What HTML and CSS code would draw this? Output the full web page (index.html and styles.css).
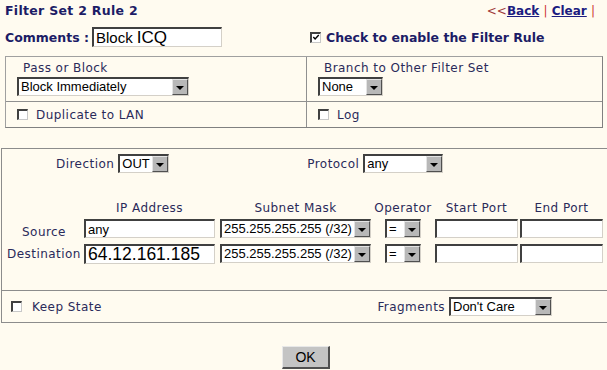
FILE: index.html
```html
<!DOCTYPE html>
<html>
<head>
<meta charset="utf-8">
<title>Filter Set 2 Rule 2</title>
<link rel="stylesheet" href="styles.css">
</head>
<body>
<div class="page">
  <div class="top">
    <div class="title">Filter Set 2 Rule 2</div>
    <div class="links"><span class="lt">&lt;&lt;</span><a href="#">Back</a> <span class="bar">|</span> <a href="#">Clear</a> <span class="bar">|</span></div>
  </div>

  <div class="comments-row">
    <div class="cm-left">
      <div class="comments">Comments :</div>
      <div class="field comment-field"><span class="s1">Block</span> <span class="s2">ICQ</span></div>
    </div>
    <div class="enable"><span class="cb"><svg viewBox="0 0 9 9" width="9" height="9"><path d="M1.5 4 L3.5 6.2 L7.6 1.8" fill="none" stroke="#000" stroke-width="1.6"/></svg></span><span>Check to enable the Filter Rule</span></div>
  </div>

  <div class="box1">
    <div class="cell c1">
      <div class="lbl">Pass or Block</div>
      <div class="sel w-pass"><span class="v">Block Immediately</span><span class="btn"><span class="arrow"></span></span></div>
    </div>
    <div class="cell c2">
      <div class="lbl">Branch to Other Filter Set</div>
      <div class="sel w-none"><span class="v">None</span><span class="btn"><span class="arrow"></span></span></div>
    </div>
    <div class="cell c3 chk"><span class="cb"></span><span>Duplicate to LAN</span></div>
    <div class="cell c4 chk"><span class="cb"></span><span>Log</span></div>
  </div>

  <div class="box2">
    <div class="dirrow">
      <div class="dir-group"><span class="dlabel">Direction</span><div class="sel w-out"><span class="v">OUT</span><span class="btn"><span class="arrow"></span></span></div></div>
      <div class="proto-group"><span class="dlabel">Protocol</span><div class="sel w-proto"><span class="v">any</span><span class="btn"><span class="arrow"></span></span></div></div>
    </div>
    <div class="grid">
      <div class="h"></div>
      <div class="h w-ip">IP Address</div>
      <div class="h w-mask">Subnet Mask</div>
      <div class="h w-op">Operator</div>
      <div class="h w-port">Start Port</div>
      <div class="h w-port">End Port</div>

      <div class="rl">Source</div>
      <div class="field w-ip"><span class="fv sm">any</span></div>
      <div class="sel w-mask"><span class="v">255.255.255.255 (/32)</span><span class="btn"><span class="arrow"></span></span></div>
      <div class="sel w-op"><span class="v">=</span><span class="btn"><span class="arrow"></span></span></div>
      <div class="field w-port"></div>
      <div class="field w-port"></div>

      <div class="rl">Destination</div>
      <div class="field w-ip tall"><span class="fv lg">64.12.161.185</span></div>
      <div class="sel w-mask"><span class="v">255.255.255.255 (/32)</span><span class="btn"><span class="arrow"></span></span></div>
      <div class="sel w-op"><span class="v">=</span><span class="btn"><span class="arrow"></span></span></div>
      <div class="field w-port"></div>
      <div class="field w-port"></div>
    </div>
  </div>

  <div class="box3">
    <div class="chk keep"><span class="cb"></span><span>Keep State</span></div>
    <div class="frag"><span class="dlabel">Fragments</span><div class="sel w-frag"><span class="v">Don't Care</span><span class="btn"><span class="arrow"></span></span></div></div>
  </div>

  <div class="actions"><button class="ok" type="button">OK</button></div>
</div>
</body>
</html>
```

FILE: styles.css
```css
html, body {
  margin: 0;
  padding: 0;
  background: #fffbf0;
}
.page {
  width: 607px;
  height: 370px;
  overflow: hidden;
  padding-top: 3px;
  box-sizing: border-box;
  font-family: "DejaVu Sans", Verdana, sans-serif;
  font-size: 12px;
  letter-spacing: 0.45px;
  color: #22225a;
}
.top {
  display: flex;
  justify-content: space-between;
  align-items: flex-start;
  height: 21px;
  padding: 0 12px 0 5px;
}
.title {
  font-weight: bold;
  font-size: 12.5px;
  letter-spacing: 0.3px;
  color: #1c1c66;
}
.links {
  padding-top: 1px;
  font-size: 12px;
  font-weight: bold;
  letter-spacing: 0;
  color: #1c1c80;
}
.links a { color: #1c1c80; }
.links .lt { color: #a03a3a; font-weight: normal; }
.links .bar { color: #cc3333; font-weight: normal; }

.comments-row {
  display: grid;
  grid-template-columns: 305px 1fr;
  align-items: center;
  height: 26px;
  padding-left: 5px;
}
.cm-left {
  display: flex;
  align-items: center;
}
.comments {
  font-weight: bold;
  font-size: 12.5px;
  letter-spacing: 0;
  color: #1c1c66;
  white-space: nowrap;
  flex: none;
  margin-right: 3px;
}
.field {
  box-sizing: border-box;
  height: 19px;
  background: #fff;
  border-top: 2px solid #404040;
  border-left: 2px solid #404040;
  border-right: 1px solid #d4d0c8;
  border-bottom: 1px solid #d4d0c8;
  font-family: "Liberation Sans", Arial, sans-serif;
  letter-spacing: 0;
  color: #000;
  display: flex;
  align-items: center;
  padding-left: 2px;
  white-space: nowrap;
  overflow: hidden;
}
.comment-field {
  width: 130px;
  height: 20px;
  flex: none;
}
.comment-field .s1 { font-size: 15px; }
.comment-field .s2 { font-size: 17px; margin-left: 4px; }
.enable {
  display: flex;
  align-items: center;
  font-weight: bold;
  font-size: 12.5px;
  letter-spacing: 0;
  color: #1c1c66;
}
.enable .cb { margin-right: 5px; }

.cb {
  box-sizing: border-box;
  display: inline-flex;
  align-items: center;
  justify-content: center;
  width: 11px;
  height: 11px;
  background: #fff;
  border-top: 2px solid #404040;
  border-left: 2px solid #404040;
  border-right: 1px solid #c8c8c8;
  border-bottom: 1px solid #c8c8c8;
  flex: none;
}
.cb svg { display: block; }

.box1 {
  margin: 6px 0 0 5px;
  width: 598px;
  box-sizing: border-box;
  display: grid;
  grid-template-columns: 301px 1fr;
  grid-template-rows: 45px 25px;
  border-top: 1px solid #a0a0a0;
  border-left: 1px solid #a0a0a0;
  border-right: 1px solid #808080;
  border-bottom: 1px solid #808080;
}
.cell {
  padding-left: 11px;
  box-sizing: border-box;
}
.c1, .c3 { border-right: 1px solid #909090; }
.c1, .c2 { border-bottom: 1px solid #909090; }
.lbl {
  padding: 4px 0 0 6px;
  height: 16px;
  color: #2a2a5a;
}
.chk {
  display: flex;
  align-items: center;
  color: #2a2a5a;
}
.chk .cb { margin-right: 8px; }

.sel {
  box-sizing: border-box;
  height: 19px;
  background: #fff;
  border-top: 2px solid #404040;
  border-left: 2px solid #404040;
  border-right: 1px solid #d4d0c8;
  border-bottom: 1px solid #d4d0c8;
  display: flex;
  align-items: stretch;
  font-family: "Liberation Sans", Arial, sans-serif;
  font-size: 13px;
  letter-spacing: 0;
  color: #000;
  white-space: nowrap;
}
.sel .v {
  flex: 1;
  overflow: hidden;
  padding-left: 2px;
  line-height: 16px;
}
.sel .btn {
  box-sizing: border-box;
  width: 16px;
  background: #b8b8b8;
  border-top: 1px solid #e4e4e4;
  border-left: 1px solid #e4e4e4;
  border-right: 1px solid #505050;
  border-bottom: 1px solid #505050;
  display: flex;
  align-items: center;
  justify-content: center;
}
.sel .arrow {
  width: 0;
  height: 0;
  border-left: 4px solid transparent;
  border-right: 4px solid transparent;
  border-top: 4px solid #000;
  margin-top: 1px;
}
.w-pass { width: 172px; }
.w-none { width: 65px; }
.w-out { width: 51px; }
.w-proto { width: 80px; }
.w-frag { width: 103px; }
.w-ip { width: 131px; }
.w-mask { width: 151px; }
.w-op { width: 36px; }
.w-port { width: 83px; }

.box2 {
  margin: 20px 0 0 1px;
  border-top: 1px solid #8c8c8c;
  border-left: 1px solid #8c8c8c;
  height: 142px;
  box-sizing: border-box;
}
.dirrow {
  display: flex;
  align-items: center;
  height: 19px;
  padding-top: 5px;
}
.dir-group {
  display: flex;
  align-items: center;
  margin-left: 54px;
}
.proto-group {
  display: flex;
  align-items: center;
  margin-left: 138px;
}
.dlabel { margin-right: 4px; color: #2a2a5a; }

.grid {
  display: grid;
  grid-template-columns: 82px 136px 165px 50px 85px 83px;
  grid-template-rows: 18px 25px 20px;
  align-items: center;
  margin-top: 28px;
}
.h {
  display: flex;
  justify-content: center;
  white-space: nowrap;
  color: #2a2a5a;
  align-self: start;
}
.rl {
  text-align: center;
  color: #2a2a5a;
  padding-left: 2px;
  white-space: nowrap;
}
.grid .field, .grid .sel { align-self: start; }
.grid .field.tall { height: 20px; }
.fv.sm { font-size: 13px; }
.fv.lg { font-size: 17.5px; }

.box3 {
  margin-left: 1px;
  border-top: 1px solid #8c8c8c;
  border-left: 1px solid #8c8c8c;
  border-bottom: 1px solid #8c8c8c;
  height: 33px;
  box-sizing: border-box;
  display: flex;
  align-items: center;
  justify-content: space-between;
}
.keep {
  padding-left: 9px;
}
.keep .cb { margin-right: 10px; }
.frag {
  display: flex;
  align-items: center;
  margin-right: 55px;
}

.actions {
  display: flex;
  justify-content: center;
  padding-top: 23px;
  padding-left: 5px;
}
.ok {
  width: 48px;
  height: 23px;
  background: #c4c4c4;
  border-top: 1px solid #e8e8e8;
  border-left: 1px solid #e8e8e8;
  border-right: 2px solid #505050;
  border-bottom: 2px solid #505050;
  font-family: "Liberation Sans", Arial, sans-serif;
  font-size: 14px;
  color: #000;
  padding: 0;
}
```
